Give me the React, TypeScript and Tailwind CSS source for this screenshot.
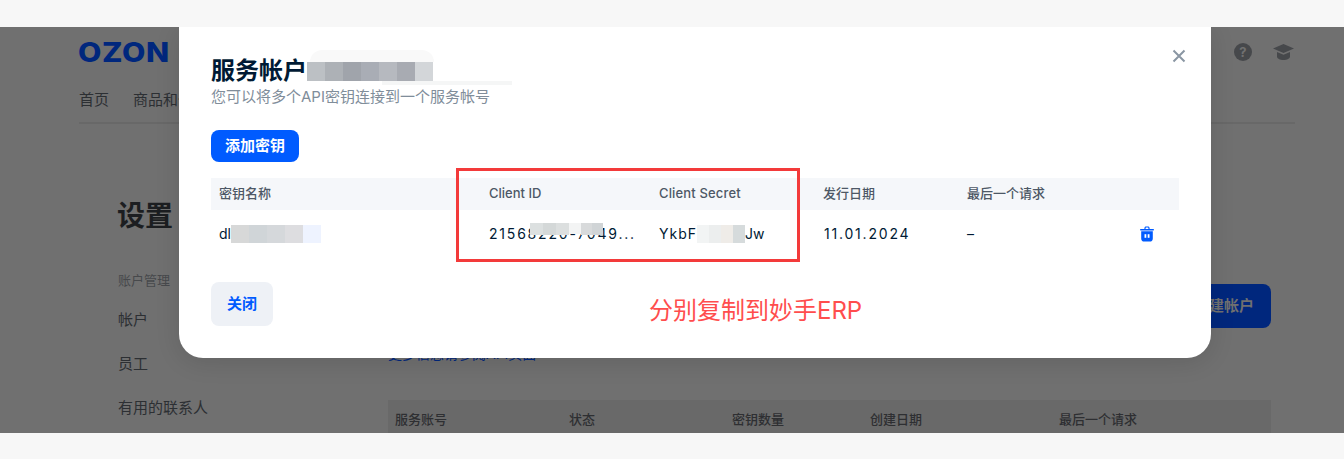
import React from "react";

const FONT = "font-['Inter','Noto_Sans_CJK_SC',sans-serif]";

function Mosaic({ cells, w, h }: { cells: string[]; w: number; h: number }) {
  return (
    <span className="inline-flex shrink-0" style={{ height: h }}>
      {cells.map((c, i) => (
        <span key={i} className="block h-full" style={{ width: w, background: c }} />
      ))}
    </span>
  );
}

function TrashIcon() {
  return (
    <svg width="16" height="16" viewBox="0 0 16 16" fill="#005bff" className="block">
      <path d="M5.400 3V2.200C5.400 1.200 6.200.5 7.200.5h1.600c1 0 1.800.7 1.800 1.700V3H9.400V2c0-.2-.2-.4-.4-.4H7c-.2 0-.4.2-.4.4v1z" />
      <rect x="1" y="3" width="14" height="1.500" rx=".75" />
      <path d="M2.200 5.300h11.600V12.500a3.100 3.100 0 0 1-3.100 3.100H5.300a3.100 3.100 0 0 1-3.100-3.100z" />
      <rect x="5.500" y="8.200" width="1.800" height="3.600" fill="#fff" />
      <rect x="8.700" y="8.200" width="1.800" height="3.600" fill="#fff" />
    </svg>
  );
}

function Background() {
  return (
    <div className="h-full pl-[79px] pr-[49px] bg-[#707070] text-[#2c2f33]">
      <div className="flex items-center h-[50px]">
        <span className="font-['Inter'] font-extrabold text-[27px] leading-none text-[#00277d] tracking-[0.5px] scale-x-[1.12] origin-left -ml-px">OZON</span>
        <div className="ml-auto flex items-center gap-[21px] pr-[1px]">
          <span className="w-[18px] h-[18px] rounded-full bg-[#46484b] text-[#707070] text-[13px] font-bold leading-[18px] text-center">?</span>
          <svg width="21" height="16" viewBox="0 0 21 16" fill="#46484b">
            <path d="M10.500 0 21 4.500 10.500 9 0 4.500z" />
            <path d="M4 8v4.500C4 14.500 7 16 10.500 16s6.500-1.500 6.500-3.500V8l-6.500 2.800z" />
          </svg>
        </div>
      </div>
      <div className="flex gap-6 text-[15px] leading-5 h-[47px] pt-[13px] border-b-2 border-[#686868]">
        <span>首页</span>
        <span>商品和价格</span>
      </div>
      <div className="flex pl-[39px] pr-[24px] pt-[74px]">
        <div className="w-[270px] shrink-0">
          <div className="text-[28px] font-bold leading-9 text-[#1c1e21] mb-[38px] -ml-px">设置</div>
          <div className="text-[13px] leading-4 text-[#47494c] mb-[22px]">账户管理</div>
          <div className="text-[15px] leading-5 mb-6">帐户</div>
          <div className="text-[15px] leading-5 mb-6">员工</div>
          <div className="text-[15px] leading-5">有用的联系人</div>
        </div>
        <div className="flex-1 pt-[86px]">
          <div className="flex justify-end h-[44px]">
            <span className="h-11 w-[180px] rounded-lg bg-[#00277d] flex items-center justify-end pr-[17px] text-[15px] font-bold text-[#707070]">创建帐户</span>
          </div>
          <div className="text-sm leading-5 mt-[16px] text-[#00277d]">更多信息请参阅API页面</div>
          <div className="mt-[36px] h-[40px] bg-[#696969] grid grid-cols-[174px_163px_138px_189px_1fr] items-center px-[7px] text-[13px] font-medium text-[#2e2f32]">
            <span>服务账号</span>
            <span>状态</span>
            <span>密钥数量</span>
            <span>创建日期</span>
            <span>最后一个请求</span>
          </div>
        </div>
      </div>
    </div>
  );
}

export default function App() {
  return (
    <div className={`${FONT} w-[1344px] h-[459px] overflow-hidden bg-[#f7f7f7] flex flex-col`}>
      <div className="h-[27px] shrink-0" />
      <div className="relative h-[406px] shrink-0 overflow-hidden">
        <Background />
        <div className="absolute left-[179px] top-0 w-[1032px] h-[331px] bg-white rounded-b-3xl shadow-[0_4px_24px_rgba(0,0,0,0.12)] px-8 pt-[28px]">
          <div className="flex items-center h-[32px]">
            <span className="text-2xl font-bold leading-8 text-[#001a34]">服务帐户</span>
            <span className="relative inline-flex">
              <Mosaic w={18} h={19} cells={["#bcc0c4", "#adb1b6", "#a0a4ab", "#a9adb5", "#b6b9bf", "#a8abb2", "#d3d6d9"]} />
              <span className="absolute left-[3px] -top-[12px] h-[12px] w-[124px] rounded-t-[12px] bg-[#f9f9f9]" />
              <span className="absolute left-[75px] top-[19px] h-[4px] w-[130px] bg-[#f5f6f6]" />
            </span>
          </div>
          <div className="text-[15px] leading-5 text-[#808d9a]">您可以将多个API密钥连接到一个服务帐号</div>
          <button className="mt-[23px] h-8 w-[88px] rounded-lg bg-[#005bff] text-white text-[15px] font-bold block">添加密钥</button>
          <div className="relative mt-4 text-[13px]">
            <div className="grid grid-cols-[270px_170px_164px_144px_1fr] h-8 items-center bg-[#f5f7fa] text-[#4d5866] font-medium">
              <span className="pl-2">密钥名称</span>
              <span className="pl-2">Client ID</span>
              <span className="pl-2 tracking-[0.15px]">Client Secret</span>
              <span className="pl-2">发行日期</span>
              <span className="pl-2">最后一个请求</span>
            </div>
            <div className="grid grid-cols-[270px_170px_164px_144px_1fr] h-12 items-center text-sm text-[#001a34] tracking-[1.8px]">
              <span className="pl-2 flex items-center">
                <span className="tracking-normal">dl</span>
                <Mosaic w={18} h={18} cells={["#d7d8d8", "#d0d5d8", "#d5d8db", "#dddde0", "#eef3ff"]} />
              </span>
              <span className="pl-2 relative whitespace-nowrap">
                21568220-7049...
                <span className="absolute left-[49px] top-[-1px] inline-flex items-start">
                  <Mosaic w={13} h={12} cells={["#dce0e0", "#d4d8d8", "#dcdfdf"]} />
                  <Mosaic w={12} h={11} cells={["#f3f4f4"]} />
                  <Mosaic w={11} h={12} cells={["#d8dadb", "#d0d4d6"]} />
                </span>
              </span>
              <span className="pl-2 flex items-center">
                <span className="tracking-[1px]">YkbF</span>
                <Mosaic w={12} h={18} cells={["#f2f4f4", "#eceeee", "#efece8", "#d6dbdc"]} />
                <span className="tracking-normal">Jw</span>
              </span>
              <span className="pl-[9px]">11.01.2024</span>
              <span className="pl-2 flex items-center justify-between pr-[24px]">
                <span>–</span>
                <TrashIcon />
              </span>
            </div>
            <div className="absolute left-[245px] -top-[10px] w-[344px] h-[94px] border-[3px] border-[#f33a3a]" />
          </div>
          <div className="flex items-start mt-[24px]">
            <button className="h-11 w-[62px] rounded-lg bg-[#eef1f6] text-[#005bff] text-[15px] font-bold">关闭</button>
            <span className="ml-[376px] mt-[13px] text-2xl text-[#ff4d4d] leading-8">分别复制到妙手ERP</span>
          </div>
          <svg className="absolute top-[21px] right-[24px]" width="16" height="16" viewBox="0 0 16 16" fill="none" stroke="#8a96a3" strokeWidth="2">
            <path d="M2.500 2.500 13.500 13.500M13.500 2.500 2.500 13.500" />
          </svg>
        </div>
      </div>
      <div className="flex-1" />
    </div>
  );
}
